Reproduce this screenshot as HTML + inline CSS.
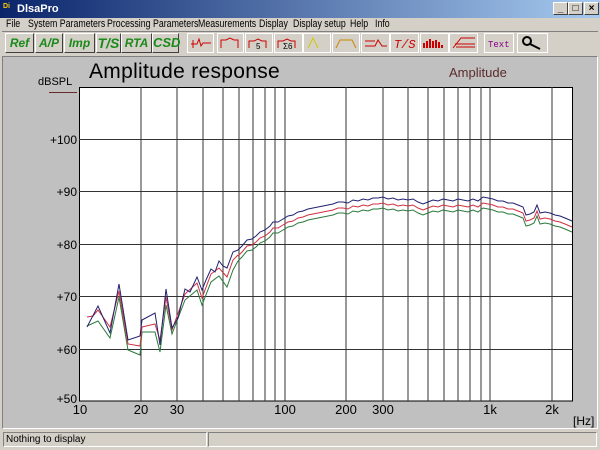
<!DOCTYPE html>
<html><head><style>
*{margin:0;padding:0;box-sizing:border-box}
body{width:600px;height:450px;background:#d4d0c8;font-family:"Liberation Sans",sans-serif;position:relative;overflow:hidden}
.abs{position:absolute}
.title{left:0;top:0;width:600px;height:18px;background:linear-gradient(90deg,#0a246a,#a6caf0);color:#fff;font-weight:bold;font-size:11px;line-height:18px;padding-left:17px}
.wb{top:2px;width:15px;height:13px;background:#d4d0c8;border:1px solid;border-color:#fff #404040 #404040 #fff;font-size:10px;line-height:11px;text-align:center;color:#000;font-weight:bold}
.menu{left:0;top:18px;height:13px;font-size:11px;line-height:13px}
.menu span{position:absolute;top:0;white-space:nowrap;transform:scaleX(.8);transform-origin:left}
.btn{position:absolute;top:33px;height:20px;border:1px solid;border-color:#fff #404040 #404040 #fff;background:#d4d0c8;text-align:center;font-weight:bold;font-style:italic;color:#1a8a1a;font-size:12px;line-height:18px}
.lbl{position:absolute;font-size:12px;color:#000}
</style></head><body>
<div class="abs title">DlsaPro</div>
<div class="abs" style="left:3px;top:3px;font-size:7px;color:#fc0;font-weight:bold">Di</div>
<div class="abs wb" style="left:553px">_</div>
<div class="abs wb" style="left:568px">□</div>
<div class="abs wb" style="left:584px">×</div>
<div class="abs menu">
<span style="left:6px">File</span><span style="left:28px">System Parameters</span><span style="left:107px">Processing Parameters</span><span style="left:198px">Measurements</span><span style="left:259px">Display</span><span style="left:293px">Display setup</span><span style="left:350px">Help</span><span style="left:375px">Info</span>
</div>
<div class="abs" style="left:2px;top:31px;width:596px;height:1px;background:#808080"></div>
<div class="btn" style="left:5px;width:29px">Ref</div>
<div class="btn" style="left:35px;width:28px">A/P</div>
<div class="btn" style="left:64px;width:31px">Imp</div>
<div class="btn" style="left:96px;width:25px;font-size:14px">T/S</div>
<div class="btn" style="left:121px;width:31px">RTA</div>
<div class="btn" style="left:152px;width:27px;font-size:13px">CSD</div>
<svg class="abs" style="left:0;top:0" width="600" height="60">
<g fill="#d4d0c8" stroke="#fff">
<rect x="187.5" y="33.5" width="26" height="19"/><rect x="217.5" y="33.5" width="26" height="19"/><rect x="245.5" y="33.5" width="27" height="19"/><rect x="274.5" y="33.5" width="28" height="19"/><rect x="303.5" y="33.5" width="27" height="19"/><rect x="332.5" y="33.5" width="27" height="19"/><rect x="361.5" y="33.5" width="28" height="19"/><rect x="390.5" y="33.5" width="28" height="19"/><rect x="420.5" y="33.5" width="28" height="19"/><rect x="449.5" y="33.5" width="28" height="19"/><rect x="484.5" y="33.5" width="29" height="19"/><rect x="517.5" y="33.5" width="30" height="19"/>
</g>
<g fill="none" stroke="#c00" stroke-width="1">
<path d="M191 44h6l2-5 2 7 2-3h8M193 40v8"/>
<path d="M221 48v-8h5l4-2 4 2h4v8"/>
<path d="M249 48v-7h5l4-2 4 2h4v7"/><text x="256" y="49" font-size="8" fill="#000" stroke="none">5</text>
<path d="M278 48v-7h5l4-2 4 2h4v7"/><text x="283" y="49" font-size="8" fill="#000" stroke="none">Σ6</text>
<path d="M336 48l4-8h12l4 8" stroke="#c80"/>
<path d="M365 46h10l3-6 4 6h5M365 41h10"/>
<path d="M424 48v-5M427 48v-7M430 48v-9M433 48v-7M436 48v-8M439 48v-6M442 48v-3" stroke-width="2"/>
<path d="M453 48l8-10h14M455 44h20M456 47h19" />
</g>
<path d="M308 48l5-10 5 10" fill="none" stroke="#cc0"/>
<text x="394" y="48" font-size="12" font-style="italic" fill="#c00" font-family="Liberation Mono">T/S</text>
<text x="488" y="47" font-size="9" fill="#808" font-family="Liberation Mono">Text</text>
<circle cx="527" cy="41" r="4" fill="none" stroke="#000" stroke-width="2"/><path d="M530 44l10 5" stroke="#000" stroke-width="2"/>
</svg>
<div class="abs" style="left:2px;top:56px;width:596px;height:373px;background:#c0c0c0;border:1px solid;border-color:#808080 #fff #fff #808080"></div>
<div class="abs" style="left:89px;top:60px;font-size:21px;letter-spacing:0.3px;color:#000">Amplitude response</div>
<div class="abs" style="left:449px;top:65px;font-size:13px;color:#5a2a2a">Amplitude</div>
<div class="lbl" style="left:38px;top:76px;font-size:11px">dBSPL</div>
<div class="abs" style="left:49px;top:92px;width:28px;height:1px;background:#6a2a2a"></div>
<svg class="abs" style="left:0;top:0" width="600" height="450">
<rect x="79.5" y="87.5" width="493" height="313.5" fill="#fff" stroke="#000"/>
<g stroke="#333" stroke-width="1">
<path d="M141 87v314M177 87v314M203 87v314M223 87v314M239 87v314M253 87v314M265 87v314M275 87v314M285 87v314M346 87v314M383 87v314M408 87v314M428 87v314M444 87v314M458 87v314M470 87v314M481 87v314M490 87v314M552 87v314"/>
<path d="M79 139.5h493M79 191.5h493M79 244.5h493M79 296.5h493M79 349.5h493"/>
</g>
<defs><polyline id="hi" fill="none" points="238,250 242,246 247,240 252,239 256,236 260,232 265,230 270,226 273,222 278,222 283,219 288,216 293,215 298,212 303,211 308,209 313,208 318,207 323,206 328,205 333,204 338,202 343,202 348,203 353,200 358,201 363,199 368,200 373,198 378,198 383,197 388,199 393,198 398,200 403,199 408,200 413,199 418,202 423,204 428,202 433,200 438,201 443,199 448,200 453,201 458,199 463,200 468,201 473,199 478,201 483,197 488,198 493,199 498,201 503,201 508,203 513,203 518,205 523,207 526,215 530,214 534,212 537,205 540,213 545,212 550,213 555,215 560,216 565,218 572,221"/></defs>
<g fill="none">
<polyline stroke="#2a7a3a" points="87,326 98,321 110,338 119,297 128,350 140,355 142,332 155,332 160,352 166,305 172,334 185,300 197,290 202,305 211,282 219,276 227,287 233,270 238,261"/>
<use href="#hi" stroke="#2a7a3a" transform="translate(0,11)"/>
<polyline stroke="#d03040" points="87,317 93,316 98,310 110,327 119,291 128,344 140,346 142,327 155,324 160,340 166,297 172,330 185,294 197,283 202,298 211,274 219,268 227,277 233,260 238,255"/>
<use href="#hi" stroke="#d03040" transform="translate(0,6)"/>
<polyline stroke="#202070" points="87,327 98,306 110,333 119,284 128,340 140,336 142,320 155,313 160,345 166,289 172,328 178,318 185,289 190,292 197,277 202,290 206,280 211,269 215,272 219,261 223,266 227,268 233,252 238,250"/>
<use href="#hi" stroke="#202070"/>
</g>
<g font-size="12" fill="#000" text-anchor="end">
<text x="77" y="144">+100</text><text x="77" y="196">+90</text><text x="77" y="249">+80</text><text x="77" y="301">+70</text><text x="77" y="354">+60</text><text x="77" y="403">+50</text>
</g>
<g font-size="13" fill="#000" text-anchor="middle">
<text x="80" y="414">10</text><text x="141" y="414">20</text><text x="177" y="414">30</text><text x="285" y="414">100</text><text x="346" y="414">200</text><text x="383" y="414">300</text><text x="490" y="414">1k</text><text x="552" y="414">2k</text>
</g>
<text x="573" y="425" font-size="12" fill="#000">[Hz]</text>
</svg>
<div class="abs" style="left:3px;top:432px;width:204px;height:15px;background:#d4d0c8;border:1px solid;border-color:#808080 #fff #fff #808080;font-size:10px;line-height:13px;padding-left:2px">Nothing to display</div>
<div class="abs" style="left:208px;top:432px;width:389px;height:15px;border:1px solid;border-color:#808080 #fff #fff #808080"></div>
</body></html>
